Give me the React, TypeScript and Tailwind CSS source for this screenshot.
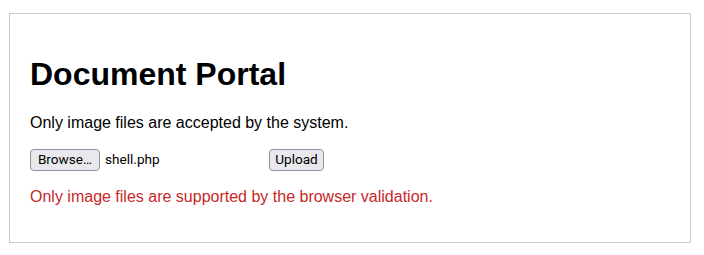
export default function App() {
  return (
    <div className="bg-white w-[704px] h-[255px] overflow-hidden pt-[13px] pl-[9px]">
      <div
        className="w-[682px] h-[230px] border border-[#cccccc] px-[20px] pt-[20px]"
        style={{ fontFamily: '"Liberation Sans", Arial, sans-serif' }}
      >
        <h1 className="text-[32px] font-bold text-black leading-[36.8px] mt-[22px] mb-[20.88px]">
          Document Portal
        </h1>
        <p className="text-[16px] leading-[18.4px] text-black mb-[16px]">
          Only image files are accepted by the system.
        </p>
        <div
          className="flex items-center h-[23px] text-[13.6px] text-black"
          style={{ fontFamily: 'Roboto, sans-serif' }}
        >
          <button className="w-[70px] h-[22px] flex items-center justify-center bg-[#e9e9ed] border border-[#8f8f9d] rounded-[4px] leading-none">
            Browse…
          </button>
          <span className="ml-[5px] w-[164px]">shell.php</span>
          <button className="w-[55px] h-[22px] flex items-center justify-center bg-[#e9e9ed] border border-[#8f8f9d] rounded-[4px] leading-none">
            Upload
          </button>
        </div>
        <p className="text-[16px] leading-[18.4px] text-[#c62828] mt-[17px]">
          Only image files are supported by the browser validation.
        </p>
      </div>
    </div>
  );
}
